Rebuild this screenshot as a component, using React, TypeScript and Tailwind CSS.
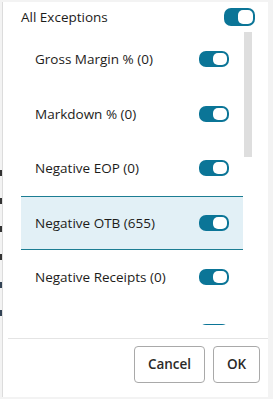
import React from 'react';

const items = [
  { label: 'Gross Margin % (0)' },
  { label: 'Markdown % (0)' },
  { label: 'Negative EOP (0)' },
  { label: 'Negative OTB (655)', selected: true },
  { label: 'Negative Receipts (0)' },
  { label: '' },
];

const Toggle: React.FC<{ big?: boolean }> = ({ big }) => (
  <div
    className={
      big
        ? 'w-[31px] h-[18px] rounded-[7px] bg-[#0b7597] p-[2px] flex justify-end shrink-0'
        : 'w-[30px] h-[16px] rounded-[7px] bg-[#0b7597] p-[2px] flex justify-end shrink-0'
    }
  >
    <div className={big ? 'w-[15px] h-full rounded-[5px] bg-white' : 'w-[14px] h-full rounded-[5px] bg-white'} />
  </div>
);

export default function App() {
  return (
    <div
      className="w-[273px] h-[399px] flex bg-[#f3f3f3] overflow-hidden text-[#1d1c1a]"
      style={{ fontFamily: '"Open Sans", "Noto Sans", sans-serif' }}
    >
      {/* background peeking out on the left */}
      <div className="w-[2px] flex flex-col gap-[22px] pt-[170px]">
        <div className="h-[6px] w-[2px] bg-[#333]" />
        <div className="h-[6px] w-[2px] bg-[#333]" />
        <div className="h-[6px] w-[2px] bg-[#333]" />
        <div className="h-[6px] w-[2px] bg-[#333]" />
        <div className="h-[6px] w-[2px] bg-[#345]" />
        <div className="h-[6px] w-[2px] bg-[#345]" />
      </div>

      <div className="w-[266px] h-[395px] mt-[2px] bg-white border-l border-[#dcdcdc] flex flex-col">
        {/* header */}
        <div className="h-[30px] pl-[18px] pr-[13px] flex items-center justify-between">
          <span className="text-[13.5px]">All Exceptions</span>
          <Toggle big />
        </div>

        {/* scroll area */}
        <div className="h-[293px] pl-[18px] flex gap-[1px] overflow-hidden">
          <div className="w-[222px] flex flex-col">
            {items.map((it, i) => (
              <div
                key={i}
                className={
                  it.selected
                    ? 'h-[54.5px] shrink-0 pl-[14px] pr-[14px] flex items-center justify-between bg-[#e2f0f6] border-y border-[#1c7d93]'
                    : 'h-[54.5px] shrink-0 pl-[14px] pr-[14px] flex items-center justify-between'
                }
              >
                <span className="text-[13.5px]">{it.label}</span>
                <Toggle />
              </div>
            ))}
          </div>
          <div className="w-[8px]">
            <div className="h-[125px] bg-[#dedede]" />
          </div>
        </div>

        {/* footer */}
        <div className="mt-[13px] ml-[5px] border-t border-[#e4e4e4] flex justify-end gap-[8px] pt-[7px] pr-[8px]">
          <button className="w-[71px] h-[37px] rounded-[4px] border border-[#a9a9a9] bg-white text-[13.5px] font-semibold text-[#2b2a28]">
            Cancel
          </button>
          <button className="w-[47px] h-[37px] rounded-[4px] border border-[#a9a9a9] bg-white text-[13.5px] font-semibold text-[#2b2a28]">
            OK
          </button>
        </div>
      </div>
    </div>
  );
}
